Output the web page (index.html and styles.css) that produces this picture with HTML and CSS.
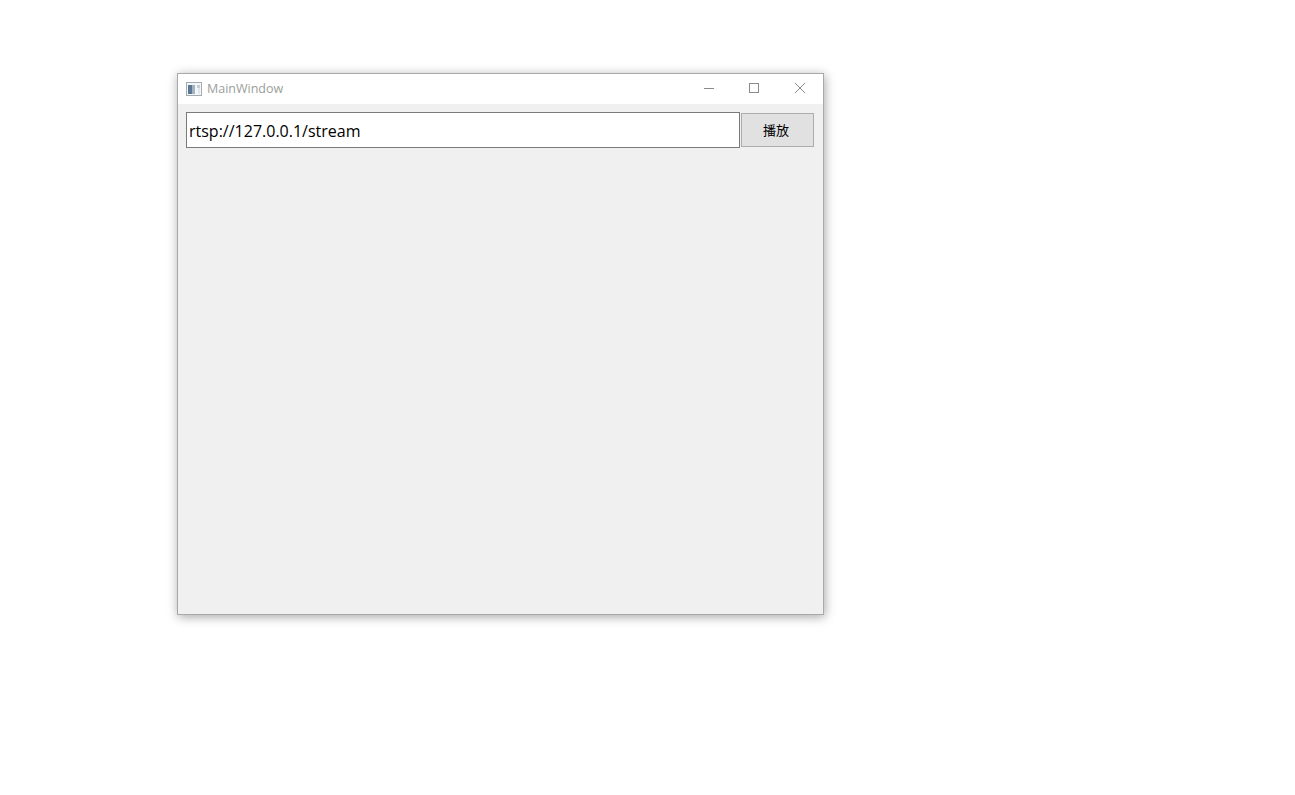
FILE: index.html
```html
<!DOCTYPE html>
<html lang="en">
<head>
    <meta charset="UTF-8">
    <meta name="viewport" content="width=device-width, initial-scale=1.0">
    <title>MainWindow</title>
    <link rel="stylesheet" href="styles.css">
</head>
<body>
    <div class="window">
        <div class="titlebar">
            <svg class="app-icon" width="16" height="14" viewBox="0 0 16 14">
                <rect x="0.5" y="0.5" width="15" height="13" fill="#f4f6f8" stroke="#a3abb2"/>
                <rect x="2" y="3" width="7" height="9" fill="#5a7793"/>
                <rect x="6" y="3" width="3" height="9" fill="#a3b3c0"/>
                <rect x="11" y="3" width="3" height="3" fill="#c4ced6"/>
                <rect x="12" y="6" width="2" height="6" fill="#dfe5ea"/>
            </svg>
            <span class="title">MainWindow</span>
            <div class="controls">
                <button class="ctl">
                    <svg width="11" height="11" viewBox="0 0 11 11"><path d="M0 5.5H10" stroke="#8a8a8a" fill="none"/></svg>
                </button>
                <button class="ctl">
                    <svg width="11" height="11" viewBox="0 0 11 11"><rect x="0.5" y="0.5" width="9" height="9" stroke="#8a8a8a" fill="none"/></svg>
                </button>
                <button class="ctl">
                    <svg width="12" height="14" viewBox="0 0 12 14"><path d="M1 1L11 11M11 1L1 11" stroke="#8a8a8a" fill="none"/></svg>
                </button>
            </div>
        </div>
        <div class="content">
            <div class="toolbar">
                <input class="url" type="text" value="rtsp://127.0.0.1/stream">
                <button class="play">播放</button>
            </div>
        </div>
    </div>
</body>
</html>
```

FILE: styles.css
```css
body {
    margin: 0;
    background-color: #fff;
    font-family: "Liberation Sans", "Noto Sans CJK SC", sans-serif;
    height: 795px;
    overflow: hidden;
}

/* window sits on the desktop */
.window {
    position: absolute;
    left: 177px;
    top: 73px;
    width: 645px;
    height: 540px;
    border: 1px solid #a9a9a9;
    background-color: #f0f0f0;
    box-shadow: 1px 2px 10px rgba(0, 0, 0, 0.35);
    display: flex;
    flex-direction: column;
}

.titlebar {
    height: 30px;
    box-sizing: border-box;
    padding-bottom: 1px;
    background-color: #fff;
    display: flex;
    align-items: center;
    padding-left: 8px;
}

.app-icon {
    margin-right: 5px;
}

.title {
    font-family: "Open Sans", "Noto Sans", sans-serif;
    font-size: 12.5px;
    color: #9aa09a;
}

.controls {
    margin-left: auto;
    display: flex;
    padding-right: 1px;
}

.ctl {
    width: 45px;
    height: 30px;
    border: none;
    padding: 0;
    background: none;
    display: flex;
    align-items: center;
    justify-content: center;
}

.content {
    flex: 1;
    padding: 8px 9px 0 8px;
}

.toolbar {
    display: flex;
    align-items: center;
    gap: 1px;
}

.url {
    flex: 1;
    min-width: 0;
    height: 36px;
    box-sizing: border-box;
    border: 1px solid #7a7a7a;
    padding: 1px 2px 0;
    background-color: #fff;
    font-family: "Open Sans", "Noto Sans", sans-serif;
    font-size: 16px;
    color: #000;
    outline: none;
}

.play {
    width: 73px;
    height: 34px;
    box-sizing: border-box;
    border: 1px solid #adadad;
    background-color: #e1e1e1;
    font-family: "Noto Sans CJK SC", sans-serif;
    font-size: 13px;
    color: #000;
    padding: 0 3px 2px 0;
}
```
